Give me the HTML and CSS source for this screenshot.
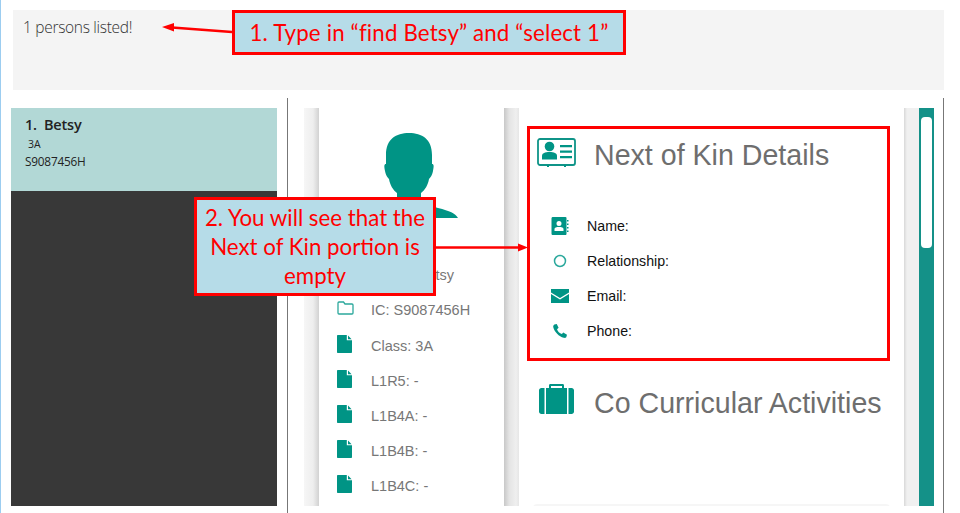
FILE: index.html
```html
<!DOCTYPE html>
<html lang="en">
<head>
<meta charset="utf-8">
<title>Find Betsy</title>
<link rel="stylesheet" href="styles.css">
</head>
<body>
<div class="edge"></div>
<div class="app">
  <div class="result">1 persons listed!</div>
  <div class="workspace">
    <div class="list">
      <div class="card">
        <div class="card-name">1.&nbsp; Betsy</div>
        <div class="card-class">3A</div>
        <div class="card-ic">S9087456H</div>
      </div>
      <div class="list-empty"></div>
    </div>
    <div class="details">
      <div class="gutter gutter-in"></div>
      <div class="profile">
        <svg class="avatar" viewBox="0 0 98 85"><path d="M49 0C36 0 26 6 26 22V31C24 31 24 33 25 38C26 43 28 45 29 46C30 52 33 57 37 60V66C37 70 30 72 20 75C8 78 3 80 0 85H98C95 80 90 78 78 75C68 72 61 70 61 66V60C65 57 68 52 69 46C70 45 72 43 73 38C74 33 74 31 72 31V22C72 6 62 0 49 0Z"/></svg>
        <div class="facts">
          <div class="fact"><span class="fact-icon"></span><span>Name: Betsy</span></div>
          <div class="fact fact-ic"><svg class="fact-icon folder" viewBox="0 0 17 14"><path class="outline" d="M1 3V12C1 12.600 1.400 13 2 13H15C15.600 13 16 12.600 16 12V4C16 3.400 15.600 3 15 3H8L6.500 1H2C1.400 1 1 1.400 1 2Z"/></svg><span>IC: S9087456H</span></div>
          <div class="fact"><svg class="fact-icon" viewBox="0 0 15 18"><use href="#file"/></svg><span>Class: 3A</span></div>
          <div class="fact"><svg class="fact-icon" viewBox="0 0 15 18"><use href="#file"/></svg><span>L1R5: -</span></div>
          <div class="fact"><svg class="fact-icon" viewBox="0 0 15 18"><use href="#file"/></svg><span>L1B4A: -</span></div>
          <div class="fact"><svg class="fact-icon" viewBox="0 0 15 18"><use href="#file"/></svg><span>L1B4B: -</span></div>
          <div class="fact"><svg class="fact-icon" viewBox="0 0 15 18"><use href="#file"/></svg><span>L1B4C: -</span></div>
        </div>
      </div>
      <div class="gutter gutter-out"></div>
      <div class="main">
        <div class="section-head kin-head">
          <svg class="head-icon" viewBox="0 0 39 29"><rect class="outline heavy" x="1" y="1" width="37" height="26" rx="2"/><circle cx="12.500" cy="8.500" r="4.800"/><path d="M5 21.500V18C5 15 8 14 12.500 14C17 14 20 15 20 18V21.500Z"/><path d="M23 7H35V9.200H23ZM23 12.500H35V14.700H23ZM23 18H35V20.200H23ZM10 27H12V29H10ZM27 27H29V29H27Z"/></svg>
          <h2>Next of Kin Details</h2>
        </div>
        <div class="kin-rows">
          <div class="kin-row"><svg class="kin-icon book" viewBox="0 0 17 18"><path fill-rule="evenodd" d="M1.500 0H14C15 0 15 1 15 1V17C15 18 14 18 14 18H1.500C0.500 18 0 17.500 0 16.500V1.500C0 0.500 0.500 0 1.500 0ZM7.500 4A2.500 2.500 0 1 0 7.500 9A2.500 2.500 0 1 0 7.500 4ZM3 14H12V12C12 10.500 10 10 7.500 10C5 10 3 10.500 3 12Z"/><path d="M15.500 3H17V4.500H15.500ZM15.500 6.500H17V8H15.500ZM15.500 10H17V11.500H15.500ZM15.500 13.500H17V15H15.500Z"/></svg><span>Name:</span></div>
          <div class="kin-row"><svg class="kin-icon" viewBox="0 0 12 12"><circle class="outline" cx="6" cy="6" r="4.700"/></svg><span>Relationship:</span></div>
          <div class="kin-row"><svg class="kin-icon mail" viewBox="0 0 18 14"><path d="M0 0H18V3.500L9 9L0 3.500ZM0 5L9 10.500L18 5V14H0Z"/></svg><span>Email:</span></div>
          <div class="kin-row"><svg class="kin-icon" viewBox="0 0 15 15"><path d="M1.500 0.500L4 0L6 4L4.300 5.500C5 7.500 7 10 9.500 10.800L11 9.200L15 11.500L14.300 14C13.800 15 12.500 15 11.500 14.800C6.500 13.500 1.500 8.500 0.300 3.500C0 2.500 0.500 1 1.500 0.500Z"/></svg><span>Phone:</span></div>
        </div>
        <div class="section-head cca-head">
          <svg class="head-icon bag" viewBox="0 0 35 30"><path fill-rule="evenodd" d="M10 4V1.500C10 0.500 10.500 0 11.500 0H23.500C24.500 0 25 0.500 25 1.500V4H28V30H7V4ZM12 2V4H23V2Z"/><path d="M5.500 4V30H2.500C1 30 0 29 0 27.500V6.500C0 5 1 4 2.500 4ZM29.500 4H32.500C34 4 35 5 35 6.500V27.500C35 29 34 30 32.500 30H29.500Z"/></svg>
          <h2>Co Curricular Activities</h2>
        </div>
        <div class="next-card"></div>
      </div>
      <div class="gutter gutter-flat"></div>
      <div class="scrollbar"><div class="thumb"></div></div>
    </div>
  </div>
</div>

<svg class="hidden-defs" width="0" height="0"><defs><path id="file" d="M1 0H9.800V5.200H15V17C15 17.600 14.600 18 14 18H1C0.400 18 0 17.600 0 17V1C0 0.400 0.400 0 1 0ZM11 0.600L14.600 4.200H11Z"/></defs></svg>

<svg class="arrows" viewBox="0 0 960 513">
  <path d="M232 32L172 27.500" />
  <path class="head" d="M162 27L174 23V31.500Z"/>
  <path d="M433 247.500H519" />
  <path class="head" d="M528 247.500L518 243.500V251.500Z"/>
</svg>
<div class="note note-find">1. Type in “find Betsy” and “select 1”</div>
<div class="note note-kin">2. You will see that the Next of Kin portion is empty</div>
<div class="kin-frame"></div>
</body>
</html>
```
FILE: styles.css
```css
* { box-sizing: border-box; }
html, body { height: 100%; }
body {
  margin: 0;
  background: #fff;
  overflow: hidden;
  font-family: "Liberation Sans", Arial, sans-serif;
}
.edge {
  position: absolute;
  left: 0;
  top: 0;
  bottom: 0;
  width: 1px;
  background: #9ccdf0;
}
.app {
  display: flex;
  flex-direction: column;
  height: 513px;
  padding-top: 10px;
}
.result {
  height: 80px;
  margin: 0 16px 0 13px;
  padding: 7px 10px;
  background: #f4f4f4;
  color: #333;
  font: 300 15.500px/20px "Open Sans", sans-serif;
  letter-spacing: -0.300px;
}
.workspace {
  display: flex;
  flex: 1;
  min-height: 0;
  margin-top: 8px;
}
.list {
  display: flex;
  flex-direction: column;
  width: 288px;
  padding: 10px 10px 7px 11px;
  border-right: 1px solid #777;
}
.card {
  height: 83px;
  padding: 7px 14px;
  background: #b2d8d6;
  color: #222;
  font-family: "Open Sans", sans-serif;
}
.card-name {
  font-size: 14.500px;
  font-weight: 600;
  line-height: 20px;
  letter-spacing: -0.200px;
}
.card-class {
  margin-top: 1px;
  padding-left: 3px;
  font-size: 10.500px;
  line-height: 17px;
}
.card-ic {
  font-size: 11.800px;
  line-height: 16px;
  letter-spacing: -0.200px;
}
.list-empty {
  flex: 1;
  background: #383838;
}
.details {
  display: flex;
  width: 656px;
  padding: 10px 0 7px 16px;
  border-right: 1px solid #777;
}
.gutter {
  width: 15px;
}
.gutter-in {
  background: linear-gradient(to right, #f6f6f6, #eee 60%, #d2d2d2);
}
.gutter-out {
  background: linear-gradient(to right, #c8c8c8, #e4e4e4 35%, #efefef 80%, #e6e6e6);
}
.gutter-flat {
  background: linear-gradient(to right, #d8d8d8, #f0f0f0 20%);
}
.profile {
  width: 185px;
  overflow: hidden;
}
.avatar {
  display: block;
  width: 98px;
  height: 85px;
  margin: 25px 0 0 41px;
  fill: #009485;
}
.facts {
  margin-top: 39px;
}
.fact {
  display: flex;
  align-items: center;
  height: 35px;
  padding-left: 18px;
  color: #777;
  font-size: 14.500px;
}
.fact-ic {
  height: 36px;
}
.fact-icon {
  width: 15px;
  height: 18px;
  margin-right: 19px;
  margin-bottom: 4px;
  flex: none;
  fill: #009485;
}
.folder {
  width: 17px;
  height: 14px;
  margin: 0 17px 4px 0;
}
.outline {
  fill: none;
  stroke: #2ba89c;
  stroke-width: 1.300;
}
.heavy {
  stroke: #0f9488;
  stroke-width: 1.800;
}
.main {
  position: relative;
  width: 385px;
  overflow: hidden;
}
.section-head {
  display: flex;
  align-items: center;
}
.section-head h2 {
  margin: 0;
  color: #6e6e6e;
  font-size: 28.600px;
  font-weight: 400;
  white-space: nowrap;
}
.head-icon {
  flex: none;
  width: 39px;
  height: 29px;
  margin-right: 18px;
  margin-bottom: 5px;
  fill: #009485;
}
.kin-head {
  height: 38px;
  margin-top: 28px;
  padding-left: 18px;
}
.bag {
  width: 35px;
  height: 30px;
  margin-left: 2px;
  margin-right: 20px;
  margin-bottom: 8px;
}
.kin-rows {
  margin-top: 34px;
}
.kin-row {
  display: flex;
  align-items: center;
  height: 35px;
  padding-left: 32px;
  color: #111;
  font-size: 14.200px;
}
.kin-icon {
  flex: none;
  width: 18px;
  height: 14px;
  margin-right: 18px;
  fill: #009485;
}
.book {
  height: 18px;
}
.cca-head {
  height: 38px;
  margin-top: 36px;
  padding-left: 18px;
}
.next-card {
  position: absolute;
  left: 14px;
  right: 14px;
  top: 396px;
  height: 4px;
  border-radius: 4px 4px 0 0;
  background: #f6f6f6;
}
.scrollbar {
  width: 15px;
  padding: 9px 2px;
  background: #149188;
}
.thumb {
  height: 131px;
  border-radius: 4px;
  background: #fff;
}
.hidden-defs {
  position: absolute;
}
.arrows {
  position: absolute;
  left: 0;
  top: 0;
  width: 960px;
  height: 513px;
  fill: none;
  stroke: #f00;
  stroke-width: 2.500;
}
.arrows .head {
  fill: #f00;
  stroke: none;
}
.note {
  position: absolute;
  display: flex;
  align-items: center;
  justify-content: center;
  border: 3px solid #f00;
  background: #b6dce8;
  color: #f00;
  font-family: Lato, sans-serif;
  font-size: 22.300px;
  line-height: 29px;
  text-align: center;
}
.note-find {
  left: 232px;
  top: 10px;
  width: 394px;
  height: 45px;
  letter-spacing: 0.150px;
}
.note-kin {
  left: 194px;
  top: 197px;
  width: 242px;
  height: 99px;
  padding: 0 6px;
}
.kin-frame {
  position: absolute;
  left: 527px;
  top: 126px;
  width: 363px;
  height: 235px;
  border: 3px solid #f00;
}
```
